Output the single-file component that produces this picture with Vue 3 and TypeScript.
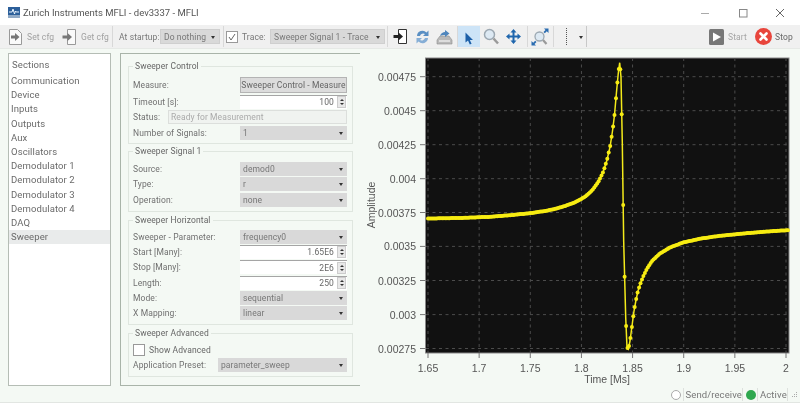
<template>
  <div class="window">
    <header class="titlebar">
      <svg class="app-icon" width="12" height="11" viewBox="0 0 12 11">
        <rect width="12" height="11" fill="#2c5f9a" />
        <rect y="8" width="12" height="3" fill="#8fa9c6" />
        <path d="M1 5h3l1-3 1.5 5 1-3 .7 1H11" fill="none" stroke="#e8f4ff" stroke-width="1" />
      </svg>
      <span class="title-text">Zurich Instruments MFLI - dev3337 - MFLI</span>
      <div class="win-controls">
        <svg width="10" height="10" viewBox="0 0 10 10"><path d="M1 5.5h8" stroke="#aaa" /></svg>
        <svg width="10" height="10" viewBox="0 0 10 10"><rect x="1.5" y="1.5" width="7.5" height="7.5" fill="none" stroke="#888" /></svg>
        <svg width="10" height="10" viewBox="0 0 10 10"><path d="M1 1l8 8M9 1l-8 8" stroke="#666" /></svg>
      </div>
    </header>

    <div class="toolbar">
      <button class="tool faded first">
        <svg width="15" height="18" viewBox="0 0 15 18">
          <path d="M1.5 1.5h8l4 4v11h-12z" fill="#fafafa" stroke="#999" />
          <path d="M3 7.5h4V5l4.500 4L7 13v-2.500H3z" fill="#777" />
        </svg>
        Set cfg
      </button>
      <button class="tool faded second">
        <svg width="15" height="18" viewBox="0 0 15 18">
          <path d="M5.500 1.500h8v15h-8z" fill="#fafafa" stroke="#999" />
          <path d="M0.500 7.500h5V5l4.500 4-4.500 4v-2.500h-5z" fill="#777" />
        </svg>
        Get cfg
      </button>
      <i class="sep" />
      <span class="tb-label startup-label">At startup:</span>
      <div class="tb-combo startup-combo">Do nothing<b class="caret" /></div>
      <i class="sep" />
      <span class="tb-check">
        <svg width="10" height="10" viewBox="0 0 10 10"><path d="M2 5l2 3 4-6" fill="none" stroke="#666" /></svg>
      </span>
      <span class="tb-label trace-label">Trace:</span>
      <div class="tb-combo trace-combo">Sweeper Signal 1 - Trace<b class="caret" /></div>
      <i class="sep" />

      <svg class="ic ic-doc" width="15" height="17" viewBox="0 0 15 17">
        <path d="M5.500 1.500h8v14h-8z" fill="#fff" stroke="#333" />
        <path d="M0.500 7h5V4.500L10 8.500l-4.500 4V10h-5z" fill="#222" />
      </svg>
      <svg class="ic ic-refresh" width="15" height="16" viewBox="0 0 15 16">
        <path d="M2 7a5.500 5.500 0 0 1 9.500-3.500L13.500 1.500V7H8l2-2A3.500 3.500 0 0 0 5 7z" fill="#5a8fc4" />
        <path d="M13 9a5.500 5.500 0 0 1-9.500 3.500L1.500 14.500V9H7l-2 2a3.500 3.500 0 0 0 5-2z" fill="#86aed6" />
      </svg>
      <svg class="ic ic-save" width="17" height="16" viewBox="0 0 17 16">
        <path d="M1 11l3-4h9l3 4v4H1z" fill="#b9b9b9" stroke="#8d8d8d" stroke-width=".6" />
        <path d="M3 11h11v2H3z" fill="#ddd" />
        <path d="M4 7c1-3 3-4 5-4V1l4.500 3.500L9 8V6C7 6 5.500 6.300 4 7z" fill="#4f86bd" />
      </svg>
      <i class="sep sep-save" />
      <span class="cursor-btn">
        <svg width="10" height="13" viewBox="0 0 10 13"><path d="M1.500 0.500v10l2.500-2 1.800 4 1.800-.8L5.800 8H9z" fill="#1c5fa8" /></svg>
      </span>
      <svg class="ic ic-zoom" width="16" height="17" viewBox="0 0 16 17">
        <circle cx="6.500" cy="6.500" r="5" fill="#dde9f3" stroke="#9ca8b2" stroke-width="1.500" />
        <path d="M10.500 10.500l4.500 5" stroke="#9a9a9a" stroke-width="2.500" />
      </svg>
      <svg class="ic ic-move" width="15" height="15" viewBox="0 0 15 15">
        <path d="M7.500 0l3 3.500H8.500V6.500h3V4.500L15 7.500l-3.500 3V8.500h-3v3h2l-3 3.500-3-3.500h2v-3h-3v2L0 7.500l3.500-3v2h3V3.500h-2z" fill="#1f66ad" />
      </svg>
      <i class="sep sep-move" />
      <svg class="ic ic-fit" width="18" height="18" viewBox="0 0 18 18">
        <circle cx="8.500" cy="8.500" r="4.500" fill="#dde9f3" stroke="#9ca8b2" stroke-width="1.300" />
        <path d="M12 12l3.500 4" stroke="#9a9a9a" stroke-width="2.200" />
        <path d="M0.500 17.500V13l1.700 1.700 2-2 1.300 1.300-2 2L5 17.500zM17.500 0.500V5l-1.700-1.700-2 2-1.300-1.300 2-2L13 .5z" fill="#2a6cb0" />
      </svg>
      <i class="sep sep-fit" />
      <i class="dots" />
      <b class="caret caret-tools" />
      <i class="sep sep-end" />
      <span class="spacer" />

      <span class="run-icon">
        <svg width="15" height="16" viewBox="0 0 15 16">
          <rect width="15" height="16" rx="1.500" fill="#777" />
          <path d="M4 3.500l8 4.500-8 4.500z" fill="#fff" />
        </svg>
      </span>
      <span class="run-label start-label">Start</span>
      <svg class="stop-icon" width="17" height="17" viewBox="0 0 17 17">
        <circle cx="8.500" cy="8.500" r="8.500" fill="#e8453c" />
        <path d="M5.500 5.500l6 6M11.500 5.500l-6 6" stroke="#fff" stroke-width="2.600" stroke-linecap="round" />
      </svg>
      <span class="run-label stop-label">Stop</span>
    </div>

    <main class="content">
      <aside class="sections">
        <div class="sections-head">Sections</div>
        <div
          v-for="s in sections"
          :key="s"
          class="section-item"
          :class="{ active: s === 'Sweeper' }"
        >{{ s }}</div>
      </aside>

      <section class="settings">
        <div v-for="g in groups" :key="g.title" class="group" :class="g.cls">
          <div class="group-title">{{ g.title }}</div>
          <div v-for="r in g.rows" :key="r.label" class="row" :class="`row-${r.kind}`">
            <template v-if="r.kind === 'check'">
              <span class="check" />
              <span class="check-label">{{ r.label }}</span>
            </template>
            <template v-else>
              <span class="row-label">{{ r.label }}</span>
              <div v-if="r.kind === 'combo'" class="combo">{{ r.value }}<b class="caret" /></div>
              <div v-else-if="r.kind === 'preset'" class="combo preset">{{ r.value }}<b class="caret" /></div>
              <div v-else-if="r.kind === 'button'" class="measure">{{ r.value }}</div>
              <div v-else-if="r.kind === 'status'" class="status">{{ r.value }}</div>
              <div v-else class="spin">
                <span class="spin-value">{{ r.value }}</span>
                <span class="spin-btns"><b class="up" /><b class="down" /></span>
              </div>
            </template>
          </div>
        </div>
      </section>

      <svg class="plot" width="440" height="338" viewBox="360 49 440 338">
        <rect x="425.500" y="58" width="363.500" height="295" fill="#111" stroke="#888" stroke-width="1" />
        <g stroke="#4c4c4c" stroke-width="1" stroke-dasharray="3 3.500">
          <line v-for="t in yTicks" :key="t.label" x1="426" x2="789" :y1="t.y" :y2="t.y" />
          <line v-for="t in xTicks" :key="t.label" :x1="t.x" :x2="t.x" y1="58" y2="353" />
        </g>
        <g stroke="#777" stroke-width="1">
          <line v-for="t in yTicks" :key="t.label" x1="420" x2="425" :y1="t.y" :y2="t.y" />
          <line v-for="t in xTicks" :key="t.label" :x1="t.x" :x2="t.x" y1="353" y2="358" />
        </g>
        <g class="tick-text" text-anchor="end">
          <text v-for="t in yTicks" :key="t.label" x="416" :y="t.y + 4">{{ t.label }}</text>
        </g>
        <g class="tick-text" text-anchor="middle">
          <text v-for="t in xTicks" :key="t.label" :x="t.x" y="372">{{ t.label }}</text>
          <text x="607" y="383">Time [Ms]</text>
          <text transform="translate(375 205) rotate(-90)">Amplitude</text>
        </g>
        <polyline :points="linePoints" fill="none" stroke="#f4ea1a" stroke-width="1.500" />
        <circle v-for="(p, i) in curve" :key="i" :cx="p[0]" :cy="p[1]" r="2" fill="#f7ec12" />
      </svg>
    </main>

    <footer class="statusbar">
      <span class="led led-off" />
      <i class="st-sep sep-a" />
      <span class="st-text send">Send/receive</span>
      <i class="st-sep" />
      <span class="led led-on" />
      <i class="st-sep sep-b" />
      <span class="st-text active-text">Active</span>
      <i class="st-sep" />
      <svg class="grip" width="7" height="7" viewBox="0 0 7 7">
        <path d="M5 1h1v1H5zM3 3h1v1H3zM5 3h1v1H5zM1 5h1v1H1zM3 5h1v1H3zM5 5h1v1H5z" fill="#aaa" />
      </svg>
    </footer>
  </div>
</template>

<script setup lang="ts">
type RowKind = "combo" | "spin" | "button" | "status" | "check" | "preset";

interface Row {
  label: string;
  kind: RowKind;
  value?: string;
}

const sections = [
  "Communication", "Device", "Inputs", "Outputs", "Aux", "Oscillators",
  "Demodulator 1", "Demodulator 2", "Demodulator 3", "Demodulator 4", "DAQ", "Sweeper",
];

const groups: { title: string; cls: string; rows: Row[] }[] = [
  {
    title: "Sweeper Control",
    cls: "g-control",
    rows: [
      { label: "Measure:", kind: "button", value: "Sweeper Control - Measure" },
      { label: "Timeout [s]:", kind: "spin", value: "100" },
      { label: "Status:", kind: "status", value: "Ready for Measurement" },
      { label: "Number of Signals:", kind: "combo", value: "1" },
    ],
  },
  {
    title: "Sweeper Signal 1",
    cls: "g-signal",
    rows: [
      { label: "Source:", kind: "combo", value: "demod0" },
      { label: "Type:", kind: "combo", value: "r" },
      { label: "Operation:", kind: "combo", value: "none" },
    ],
  },
  {
    title: "Sweeper Horizontal",
    cls: "g-horizontal",
    rows: [
      { label: "Sweeper - Parameter:", kind: "combo", value: "frequency0" },
      { label: "Start [Many]:", kind: "spin", value: "1.65E6" },
      { label: "Stop [Many]:", kind: "spin", value: "2E6" },
      { label: "Length:", kind: "spin", value: "250" },
      { label: "Mode:", kind: "combo", value: "sequential" },
      { label: "X Mapping:", kind: "combo", value: "linear" },
    ],
  },
  {
    title: "Sweeper Advanced",
    cls: "g-advanced",
    rows: [
      { label: "Show Advanced", kind: "check" },
      { label: "Application Preset:", kind: "preset", value: "parameter_sweep" },
    ],
  },
];

const xTicks = ["1.65", "1.7", "1.75", "1.8", "1.85", "1.9", "1.95", "2"].map((label) => ({
  label,
  x: 428 + (Number(label) - 1.65) * 1022.86,
}));

const yTicks = [
  ["0.00475", 76.7], ["0.0045", 110.7], ["0.00425", 144.7], ["0.004", 178.7], ["0.00375", 212.5],
  ["0.0035", 246.4], ["0.00325", 280.5], ["0.003", 314.6], ["0.00275", 348.5],
].map(([label, y]) => ({ label: label as string, y: y as number }));

// measured trace, page pixels; the sweep has 250 evenly spaced points
const knots: [number, number][] = [
  [428, 218.5], [460, 218], [490, 216.8], [510, 215.2], [530, 213.2], [545, 211], [555, 208.9],
  [565, 206], [575, 202.3], [585, 196.8], [592, 190.5], [598, 182.5], [603, 172.5], [607, 160],
  [610, 147], [612.5, 131], [614.5, 115], [616.5, 92], [618.3, 73], [619.7, 62.7], [621, 77.3],
  [622.3, 142.7], [623.7, 241.7], [625.7, 317.3], [627, 347.3], [628.3, 349], [630, 341],
  [632, 326], [634, 311], [636, 300], [638, 291], [640, 284.7], [643, 277], [647, 268.5],
  [652, 261], [660, 253.5], [670, 247.5], [683, 242.5], [700, 238.7], [720, 235.8],
  [746.7, 233.2], [770, 231.3], [788, 230.2],
];

function sample(x: number): number {
  let i = 1;
  while (i < knots.length - 1 && knots[i][0] < x) i++;
  const [x0, y0] = knots[i - 1];
  const [x1, y1] = knots[i];
  return y0 + ((x - x0) / (x1 - x0)) * (y1 - y0);
}

const curve: [number, number][] = Array.from({ length: 250 }, (_, i) => {
  const x = 428 + (i * 360) / 249;
  return [Math.round(x * 10) / 10, Math.round(sample(x) * 10) / 10];
});

const linePoints = knots.map((p) => p.join(",")).join(" ");
</script>

<style>
html,
body {
  margin: 0;
  background: #f4f9f4;
}
</style>

<style scoped>
.window {
  width: 800px;
  height: 403px;
  display: flex;
  flex-direction: column;
  overflow: hidden;
  background: #f4f9f4;
  color: #666;
  font-family: Roboto, "Noto Sans", sans-serif;
  font-size: 8.5px;
  letter-spacing: 0.1px;
  white-space: nowrap;
  filter: blur(0.3px);
}

/* title bar */
.titlebar {
  height: 25px;
  flex: none;
  display: flex;
  align-items: center;
  background: #fff;
  padding-left: 8px;
}
.app-icon {
  margin-right: 3px;
}
.title-text {
  font-size: 9.5px;
  letter-spacing: 0;
  color: #555;
}
.win-controls {
  margin-left: auto;
  width: 85px;
  display: flex;
  justify-content: space-between;
  margin-right: 15px;
}

/* toolbar */
.toolbar {
  height: 24px;
  flex: none;
  display: flex;
  align-items: center;
  background: #f0f0f0;
  border-bottom: 1px solid #e6e9e6;
  box-sizing: border-box;
}
.tool {
  display: flex;
  align-items: center;
  gap: 4px;
  border: 0;
  padding: 0;
  background: none;
  font: inherit;
  letter-spacing: inherit;
  color: #a0a0a0;
}
.first {
  margin-left: 8px;
  width: 54px;
}
.second {
  width: 50px;
}
.sep {
  width: 1px;
  height: 21px;
  background: #d8d8d8;
  flex: none;
}
.tb-label {
  color: #777;
}
.startup-label {
  margin-left: 6px;
  width: 41px;
}
.tb-combo {
  height: 13px;
  background: #d9d9d9;
  border: 1px solid #cfcfcf;
  display: flex;
  align-items: center;
  padding-left: 3px;
  position: relative;
  color: #777;
}
.startup-combo {
  width: 55px;
  margin-right: 3px;
}
.trace-combo {
  width: 110px;
  margin-right: 2px;
}
.tb-check {
  width: 10px;
  height: 10px;
  margin: 0 4px 0 2px;
  border: 1px solid #999;
  background: #fff;
  display: flex;
}
.trace-label {
  width: 28px;
}
.caret {
  position: absolute;
  right: 4px;
  top: 50%;
  margin-top: -1px;
  border-left: 2.5px solid transparent;
  border-right: 2.5px solid transparent;
  border-top: 3px solid #333;
}
.ic {
  flex: none;
}
.ic-doc {
  margin-left: 5px;
}
.ic-refresh {
  margin-left: 7px;
}
.ic-save {
  margin-left: 6px;
}
.sep-save {
  margin-left: 4px;
}
.cursor-btn {
  width: 22px;
  height: 21px;
  background: #cde4f7;
  display: flex;
  align-items: center;
  justify-content: center;
  padding-top: 4px;
  box-sizing: border-box;
}
.ic-zoom {
  margin-left: 3px;
}
.ic-move {
  margin-left: 7px;
}
.sep-move {
  margin-left: 6px;
}
.ic-fit {
  margin-left: 3px;
}
.sep-fit {
  margin-left: 4px;
}
.dots {
  margin-left: 12px;
  height: 17px;
  border-left: 1px dotted #555;
}
.caret-tools {
  position: static;
  margin: 1px 0 0 12px;
}
.sep-end {
  margin-left: 3px;
  background: #c8c8c8;
}
.spacer {
  flex: 1;
}
.run-icon {
  display: flex;
  margin-right: 4px;
}
.start-label {
  color: #a5a5a5;
  width: 18px;
  margin-right: 9px;
}
.stop-icon {
  margin-right: 3px;
}
.stop-label {
  color: #666;
  width: 18px;
  margin-right: 7px;
}

/* main area */
.content {
  flex: 1;
  min-height: 0;
  display: flex;
  padding: 4px 0 0 8px;
  align-items: flex-start;
}
.sections {
  width: 103px;
  height: 333px;
  flex: none;
  box-sizing: border-box;
  background: #fff;
  border: 1px solid #b5bdb5;
  margin-right: 9px;
  padding-top: 4px;
  font-size: 9.5px;
  color: #6a6a6a;
}
.sections-head {
  height: 16px;
  line-height: 14px;
  padding-left: 3px;
}
.section-item {
  height: 14.2px;
  line-height: 14.2px;
  padding-left: 2px;
}
.section-item.active {
  background: #e9ebeb;
}

.settings {
  width: 240px;
  height: 333px;
  flex: none;
  box-sizing: border-box;
  border: 1px solid #a9b4a9;
  border-right: 0;
  padding: 11.5px 0 0 7px;
}
.group {
  position: relative;
  width: 225px;
  box-sizing: border-box;
  border: 1px solid #dfe6df;
  padding: 9px 5px 4px 4px;
  margin-bottom: 7.7px;
  display: flex;
  flex-direction: column;
  gap: 1.4px;
}
.g-control {
  padding: 10.2px 5px 3px 4px;
}
.g-signal {
  margin-bottom: 8.7px;
  padding-top: 9.300px;
}
.g-horizontal {
  padding-top: 8.300px;
}
.g-advanced {
  gap: 1px;
  margin-bottom: 0;
}
.group-title {
  position: absolute;
  left: 4px;
  top: -7px;
  height: 12px;
  line-height: 12px;
  padding: 0 2px;
  background: #f4f9f4;
}
.row {
  height: 14px;
  display: flex;
  align-items: center;
  justify-content: space-between;
}
.row-button {
  height: 16px;
  margin-bottom: 0.9px;
}
.row-label {
  color: #707070;
}
.combo,
.measure,
.spin {
  width: 107px;
  box-sizing: border-box;
  height: 100%;
}
.combo {
  position: relative;
  background: #d9d9d9;
  padding-left: 3px;
  display: flex;
  align-items: center;
  color: #777;
}
.combo.preset {
  width: 129px;
}
.measure {
  background: #dcdcdc;
  border: 1px solid #b4b4b4;
  display: flex;
  align-items: center;
  justify-content: center;
  color: #666;
}
.status {
  width: 179px;
  height: 100%;
  box-sizing: border-box;
  background: #f0f3f0;
  border: 1px solid #dcdfdc;
  padding-left: 2px;
  display: flex;
  align-items: center;
  color: #aaa;
}
.spin {
  background: #fff;
  border-top: 1px solid #a5a5a5;
  display: flex;
  align-items: center;
  justify-content: flex-end;
}
.spin-value {
  margin-right: 3px;
}
.spin-btns {
  width: 9px;
  height: 12px;
  margin-right: 1px;
  background: #e8e8e8;
  border: 1px solid #ccc;
  box-sizing: border-box;
  display: flex;
  flex-direction: column;
  align-items: center;
  justify-content: center;
  gap: 2px;
}
.up {
  border-left: 2px solid transparent;
  border-right: 2px solid transparent;
  border-bottom: 2.5px solid #333;
}
.down {
  border-left: 2px solid transparent;
  border-right: 2px solid transparent;
  border-top: 2.5px solid #333;
}
.row-check {
  justify-content: flex-start;
}
.check {
  width: 10px;
  height: 10px;
  background: #fff;
  border: 1px solid #999;
  margin-right: 4px;
}

/* plot */
.plot {
  display: block;
  flex: none;
  margin-top: -4px;
}
.tick-text text {
  font-family: "Liberation Sans", Arial, sans-serif;
  font-size: 10.5px;
  letter-spacing: 0;
  fill: #555;
}

/* status bar */
.statusbar {
  height: 15px;
  flex: none;
  display: flex;
  align-items: center;
  justify-content: flex-end;
  padding-right: 2px;
  border-bottom: 1px solid #e2e6e2;
  font-size: 9.5px;
  color: #777;
}
.led {
  width: 10px;
  height: 10px;
  border-radius: 50%;
  box-sizing: border-box;
  flex: none;
}
.led-off {
  background: #fff;
  border: 1px solid #aaa;
}
.led-on {
  background: #2fa84f;
  margin: 0 1.5px 0 3px;
}
.st-sep {
  width: 1px;
  height: 13px;
  background: #dde1dd;
  flex: none;
}
.sep-a {
  margin: 0 2px;
}
.send {
  width: 56px;
}
.sep-b {
  margin-right: 2px;
}
.active-text {
  width: 27px;
}
.grip {
  margin-left: 3px;
}
</style>
